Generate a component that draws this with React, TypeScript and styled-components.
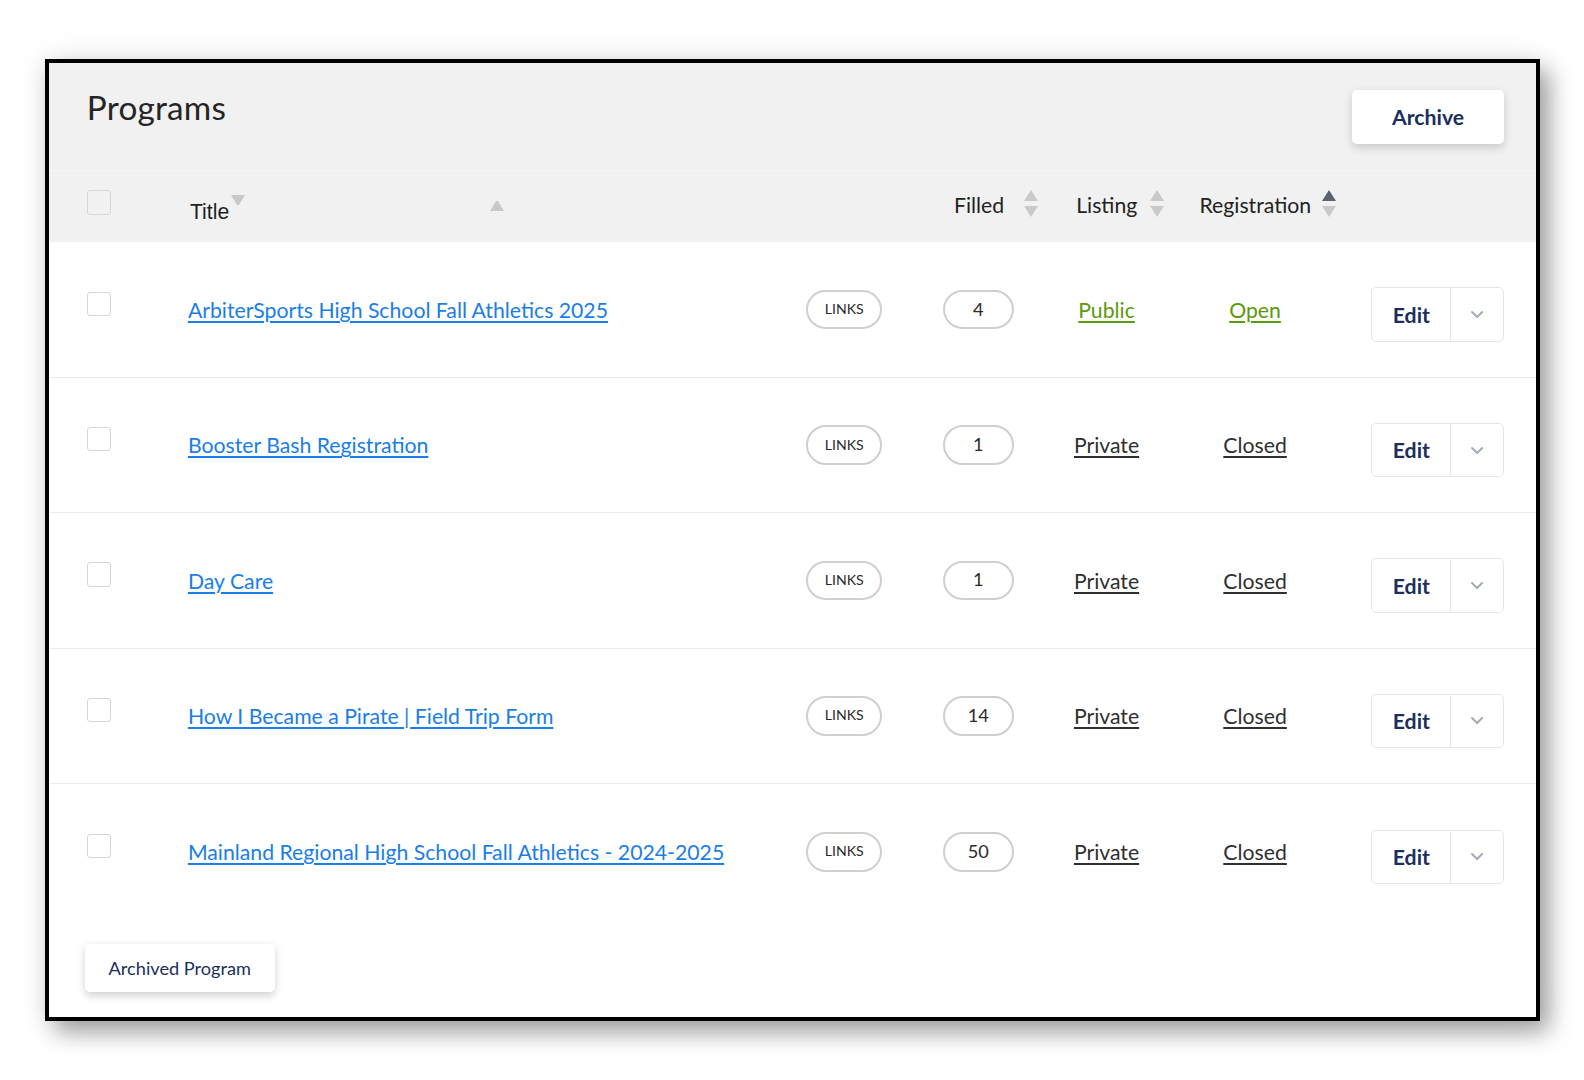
import React from 'react';
import styled, { createGlobalStyle } from 'styled-components';

interface Program {
  title: string;
  filled: number;
  listing: string;
  registration: string;
}

const programs: Program[] = [
  { title: 'ArbiterSports High School Fall Athletics 2025', filled: 4, listing: 'Public', registration: 'Open' },
  { title: 'Booster Bash Registration', filled: 1, listing: 'Private', registration: 'Closed' },
  { title: 'Day Care', filled: 1, listing: 'Private', registration: 'Closed' },
  { title: 'How I Became a Pirate | Field Trip Form', filled: 14, listing: 'Private', registration: 'Closed' },
  { title: 'Mainland Regional High School Fall Athletics - 2024-2025', filled: 50, listing: 'Private', registration: 'Closed' },
];

const COLS = '100px 612px 135px 107px 110px 184px 1fr';

const SortArrows: React.FC<{ active?: 'up' | 'down' }> = ({ active }) => (
  <Arrows>
    <Tri $dir="up" $on={active === 'up'} />
    <Tri $dir="down" $on={active === 'down'} />
  </Arrows>
);

const App: React.FC = () => {
  return (
    <>
      <GlobalStyle />
      <Page>
        <Frame>
          <Head>
            <TopBar>
              <Heading>Programs</Heading>
              <ArchiveButton>Archive</ArchiveButton>
            </TopBar>
            <HeaderRow>
              <Checkbox $head />
              <TitleHead>
                <span>Title</span>
                <Tri $dir="down" $small />
                <LoneArrow>
                  <Tri $dir="up" $small />
                </LoneArrow>
              </TitleHead>
              <span />
              <HeadCell $offset={11} $gap={20}>
                Filled
                <SortArrows />
              </HeadCell>
              <HeadCell $offset={25} $gap={13}>
                Listing
                <SortArrows />
              </HeadCell>
              <HeadCell $offset={37} $gap={11}>
                Registration
                <SortArrows active="up" />
              </HeadCell>
              <span />
            </HeaderRow>
          </Head>
          <Body>
            {programs.map((p) => (
              <Row key={p.title}>
                <Checkbox />
                <div>
                  <TitleLink href="#">{p.title}</TitleLink>
                </div>
                <div>
                  <Pill $w={75}>LINKS</Pill>
                </div>
                <div>
                  <Pill $w={70} $num>{p.filled}</Pill>
                </div>
                <StatusCell>
                  <StatusLink href="#" $green={p.listing === 'Public'}>{p.listing}</StatusLink>
                </StatusCell>
                <StatusCell>
                  <StatusLink href="#" $green={p.registration === 'Open'}>{p.registration}</StatusLink>
                </StatusCell>
                <EditCell>
                  <EditGroup>
                    <EditButton>Edit</EditButton>
                    <CaretButton>
                      <svg width="14" height="9" viewBox="0 0 14 9">
                        <path d="M2 2l5 5 5-5" fill="none" stroke="#a4abb5" strokeWidth="2" strokeLinecap="round" strokeLinejoin="round" />
                      </svg>
                    </CaretButton>
                  </EditGroup>
                </EditCell>
              </Row>
            ))}
          </Body>
          <Footer>
            <ArchivedButton>Archived Program</ArchivedButton>
          </Footer>
        </Frame>
      </Page>
    </>
  );
};

const GlobalStyle = createGlobalStyle`
  html, body {
    margin: 0;
    padding: 0;
    background: #ffffff;
    font-family: Lato, "Open Sans", Arial, sans-serif;
    overflow: hidden;
  }
  * { box-sizing: border-box; }
`;

const Page = styled.div`
  zoom: 1.0106;
  height: 1068px;
  padding: 58px 0 0 45px;
  overflow: hidden;
`;

const Frame = styled.div`
  width: 1479px;
  height: 952px;
  border: 4px solid #000;
  background: #fff;
  display: flex;
  flex-direction: column;
  box-shadow: 10px 12px 22px rgba(0, 0, 0, 0.35), 0 0 28px rgba(0, 0, 0, 0.1);
`;

const Head = styled.div`
  background: #f1f1f1;
`;

const TopBar = styled.div`
  height: 107px;
  display: flex;
  justify-content: space-between;
  align-items: flex-start;
  padding: 24px 32px 0 37px;
  border-bottom: 1px solid #f6f6f6;
`;

const Heading = styled.h1`
  margin: 0;
  font-size: 33px;
  font-weight: 400;
  color: #252525;
  letter-spacing: 0.2px;
`;

const ArchiveButton = styled.button`
  width: 150px;
  height: 54px;
  margin-top: 3px;
  border: none;
  border-radius: 5px;
  background: #fff;
  box-shadow: 0 3px 8px rgba(0, 0, 0, 0.16);
  font-family: Lato, sans-serif;
  font-size: 21px;
  font-weight: 700;
  color: #1b2f5c;
`;

const HeaderRow = styled.div`
  height: 71px;
  display: grid;
  grid-template-columns: ${COLS};
  align-items: center;
  padding: 0 32px 0 37px;
`;

const TitleHead = styled.div`
  display: flex;
  align-items: flex-start;
  font-family: "Liberation Sans", Arial, sans-serif;
  font-size: 21px;
  color: #1f1f1f;
  padding: 0 0 0 2px;
  margin-top: 5px;

  span {
    padding-top: 5px;
    padding-right: 2px;
  }
`;

const LoneArrow = styled.div`
  margin-left: 242px;
  margin-top: 1px;
`;

const HeadCell = styled.div<{ $offset: number; $gap: number }>`
  display: flex;
  align-items: center;
  gap: ${(p) => p.$gap}px;
  padding-left: ${(p) => p.$offset}px;
  margin-top: -4px;
  font-size: 21px;
  color: #222;
  white-space: nowrap;
`;

const Arrows = styled.div`
  display: flex;
  flex-direction: column;
  gap: 5px;
  margin-top: -2px;
`;

const Tri = styled.span<{ $dir: 'up' | 'down'; $on?: boolean; $small?: boolean }>`
  display: block;
  width: 0;
  height: 0;
  border-left: ${(p) => (p.$small ? 6 : 7)}px solid transparent;
  border-right: ${(p) => (p.$small ? 6 : 7)}px solid transparent;
  ${(p) => (p.$dir === 'up' ? 'border-bottom' : 'border-top')}: ${(p) => (p.$small ? 10 : 11)}px solid
    ${(p) => (p.$on ? '#5b6270' : '#c9c9c9')};
`;

const Checkbox = styled.span<{ $head?: boolean }>`
  display: block;
  width: 24px;
  height: 24px;
  border: 1.5px solid #d6d6d6;
  border-radius: 3px;
  background: ${(p) => (p.$head ? '#f1f1f1' : '#fff')};
  margin-bottom: ${(p) => (p.$head ? 8 : 12)}px;
`;

const Body = styled.div`
  display: flex;
  flex-direction: column;
`;

const Row = styled.div`
  height: 134px;
  display: grid;
  grid-template-columns: ${COLS};
  align-items: center;
  padding: 0 32px 0 37px;
  border-bottom: 1px solid #ebebeb;

  &:last-child {
    border-bottom: none;
  }
`;

const TitleLink = styled.a`
  font-size: 21px;
  color: #1a7ee6;
  text-decoration: underline;
  text-underline-offset: 3px;
`;

const Pill = styled.span<{ $w: number; $num?: boolean }>`
  display: flex;
  align-items: center;
  justify-content: center;
  width: ${(p) => p.$w}px;
  height: 39px;
  border: 2px solid #cfcfcf;
  border-radius: 20px;
  font-size: ${(p) => (p.$num ? '18px' : '14px')};
  color: #2a2a2a;
  padding-bottom: 2px;
`;

const StatusCell = styled.div`
  display: flex;
  justify-content: center;
`;

const StatusLink = styled.a<{ $green?: boolean }>`
  font-size: 21px;
  color: ${(p) => (p.$green ? '#5b9a0c' : '#2f2f2f')};
  text-decoration: underline;
  text-underline-offset: 3px;
`;

const EditCell = styled.div`
  display: flex;
  justify-content: flex-end;
  margin-top: 10px;
`;

const EditGroup = styled.div`
  display: flex;
  height: 54px;
  border: 1.5px solid #e3e6ea;
  border-radius: 5px;
  background: #fff;
`;

const EditButton = styled.button`
  width: 78px;
  border: none;
  border-right: 1.5px solid #e3e6ea;
  background: transparent;
  font-family: Lato, sans-serif;
  font-size: 21px;
  font-weight: 700;
  color: #1b2f5c;
`;

const CaretButton = styled.button`
  width: 51px;
  border: none;
  background: transparent;
  display: flex;
  align-items: center;
  justify-content: center;
`;

const Footer = styled.div`
  padding: 24px 0 0 35px;
`;

const ArchivedButton = styled.button`
  width: 188px;
  height: 48px;
  border: none;
  border-radius: 5px;
  background: #fff;
  box-shadow: 0 3px 8px rgba(0, 0, 0, 0.18);
  font-family: Lato, sans-serif;
  font-size: 18px;
  color: #1b2f5c;
`;

export default App;
